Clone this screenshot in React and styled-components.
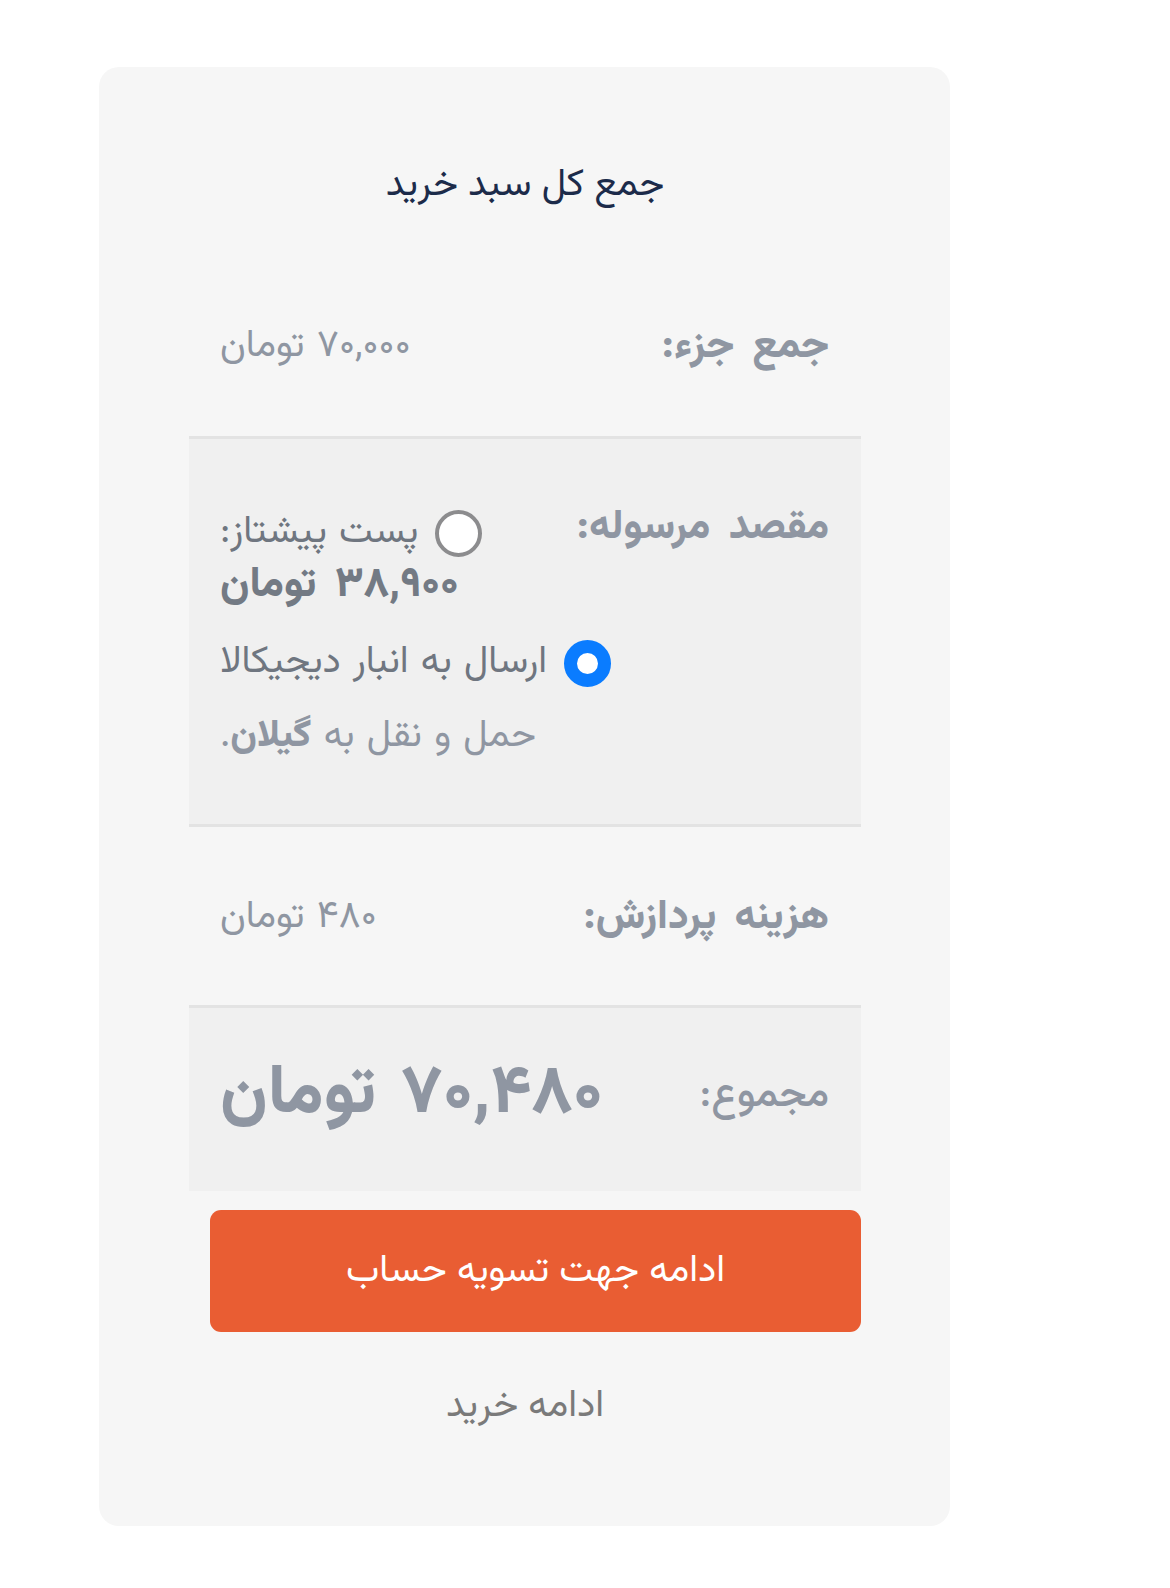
import styled, { createGlobalStyle } from "styled-components";

const GlobalStyle = createGlobalStyle`
  body {
    margin: 0;
    background: #ffffff;
    font-family: "Vazirmatn", "Noto Sans Arabic", "DejaVu Sans", sans-serif;
  }
`;

const Page = styled.div`
  padding: 67px 0 65px 99px;
  direction: ltr;
`;

const Card = styled.div`
  direction: rtl;
  width: 851px;
  box-sizing: border-box;
  background: #f6f6f6;
  border-radius: 20px;
  padding: 97px 89px 100px 90px;
  display: flex;
  flex-direction: column;
`;

const Title = styled.h2`
  margin: 0 0 50px;
  text-align: center;
  font-size: 38px;
  line-height: 44px;
  font-weight: 400;
  color: #1c2b4a;
`;

const Row = styled.div`
  display: grid;
  grid-template-columns: 232px 1fr;
  align-items: ${(p) => (p.$center ? "center" : "start")};
  background: ${(p) => (p.$shade ? "#f0f0f0" : "transparent")};
  border-top: ${(p) => (p.$line ? "3px solid #e3e3e3" : "none")};
  border-bottom: ${(p) => (p.$lineBottom ? "3px solid #e3e3e3" : "none")};
  padding: ${(p) => p.$pad || "70px 0"};
`;

const Label = styled.div`
  padding-right: 32px;
  font-size: ${(p) => (p.$light ? 41 : 41)}px;
  line-height: 38px;
  font-weight: ${(p) => (p.$light ? 500 : 800)};
  word-spacing: 8px;
  color: #8f96a2;
  white-space: nowrap;
`;

const Value = styled.div`
  margin-left: 31px;
  text-align: left;
  font-size: 38px;
  line-height: 38px;
  word-spacing: 2px;
  color: #8f96a2;
`;

const Total = styled.div`
  margin-left: 31px;
  text-align: left;
  font-size: 68px;
  line-height: 56px;
  font-weight: 800;
  word-spacing: 8px;
  color: #8f96a2;
`;

const Option = styled.label`
  display: flex;
  justify-content: flex-end;
  align-items: center;
  gap: 17px;
  height: 48px;
  margin-top: ${(p) => p.$mt || 0}px;
  color: #6f7680;
  white-space: nowrap;
`;

const Radio = styled.span`
  flex: none;
  width: 47px;
  height: 47px;
  box-sizing: border-box;
  border-radius: 50%;
  background: #ffffff;
  border: ${(p) => (p.$checked ? "13px solid #0a7cff" : "4px solid #8c8c8e")};
`;

const Price = styled.div`
  margin-top: 10px;
  font-size: 42px;
  font-weight: 800;
  word-spacing: 8px;
  color: #737a84;
`;

const Note = styled.p`
  margin: 31px 0 0;
  color: #8f96a2;

  strong {
    font-weight: 800;
  }
`;

const CheckoutButton = styled.button`
  margin: 19px 0 0 21px;
  height: 122px;
  border: none;
  border-radius: 11px;
  background: #e95d33;
  color: #ffffff;
  font-family: inherit;
  font-size: 38px;
  cursor: pointer;
`;

const ContinueLink = styled.a`
  margin-top: 56px;
  text-align: center;
  font-size: 38px;
  line-height: 38px;
  color: #7a7a7a;
  text-decoration: none;
`;

const App = () => {
  return (
    <Page>
      <GlobalStyle />
      <Card>
        <Title>جمع کل سبد خرید</Title>

        <Row>
          <Label>جمع جزء:</Label>
          <Value>۷۰,۰۰۰ تومان</Value>
        </Row>

        <Row $shade $line $lineBottom $pad="70px 0 68px">
          <Label>مقصد مرسوله:</Label>
          <Value>
            <Option>
              <Radio />
              پست پیشتاز:
            </Option>
            <Price>۳۸,۹۰۰ تومان</Price>
            <Option $mt={34}>
              <Radio $checked />
              ارسال به انبار دیجیکالا
            </Option>
            <Note>
              حمل و نقل به <strong>گیلان</strong>.
            </Note>
          </Value>
        </Row>

        <Row $pad="72px 0 68px">
          <Label>هزینه پردازش:</Label>
          <Value>۴۸۰ تومان</Value>
        </Row>

        <Row $shade $line $center $pad="60px 0 67px">
          <Label $light>مجموع:</Label>
          <Total>۷۰,۴۸۰ تومان</Total>
        </Row>

        <CheckoutButton>ادامه جهت تسویه حساب</CheckoutButton>
        <ContinueLink href="#">ادامه خرید</ContinueLink>
      </Card>
    </Page>
  );
};

export default App;
